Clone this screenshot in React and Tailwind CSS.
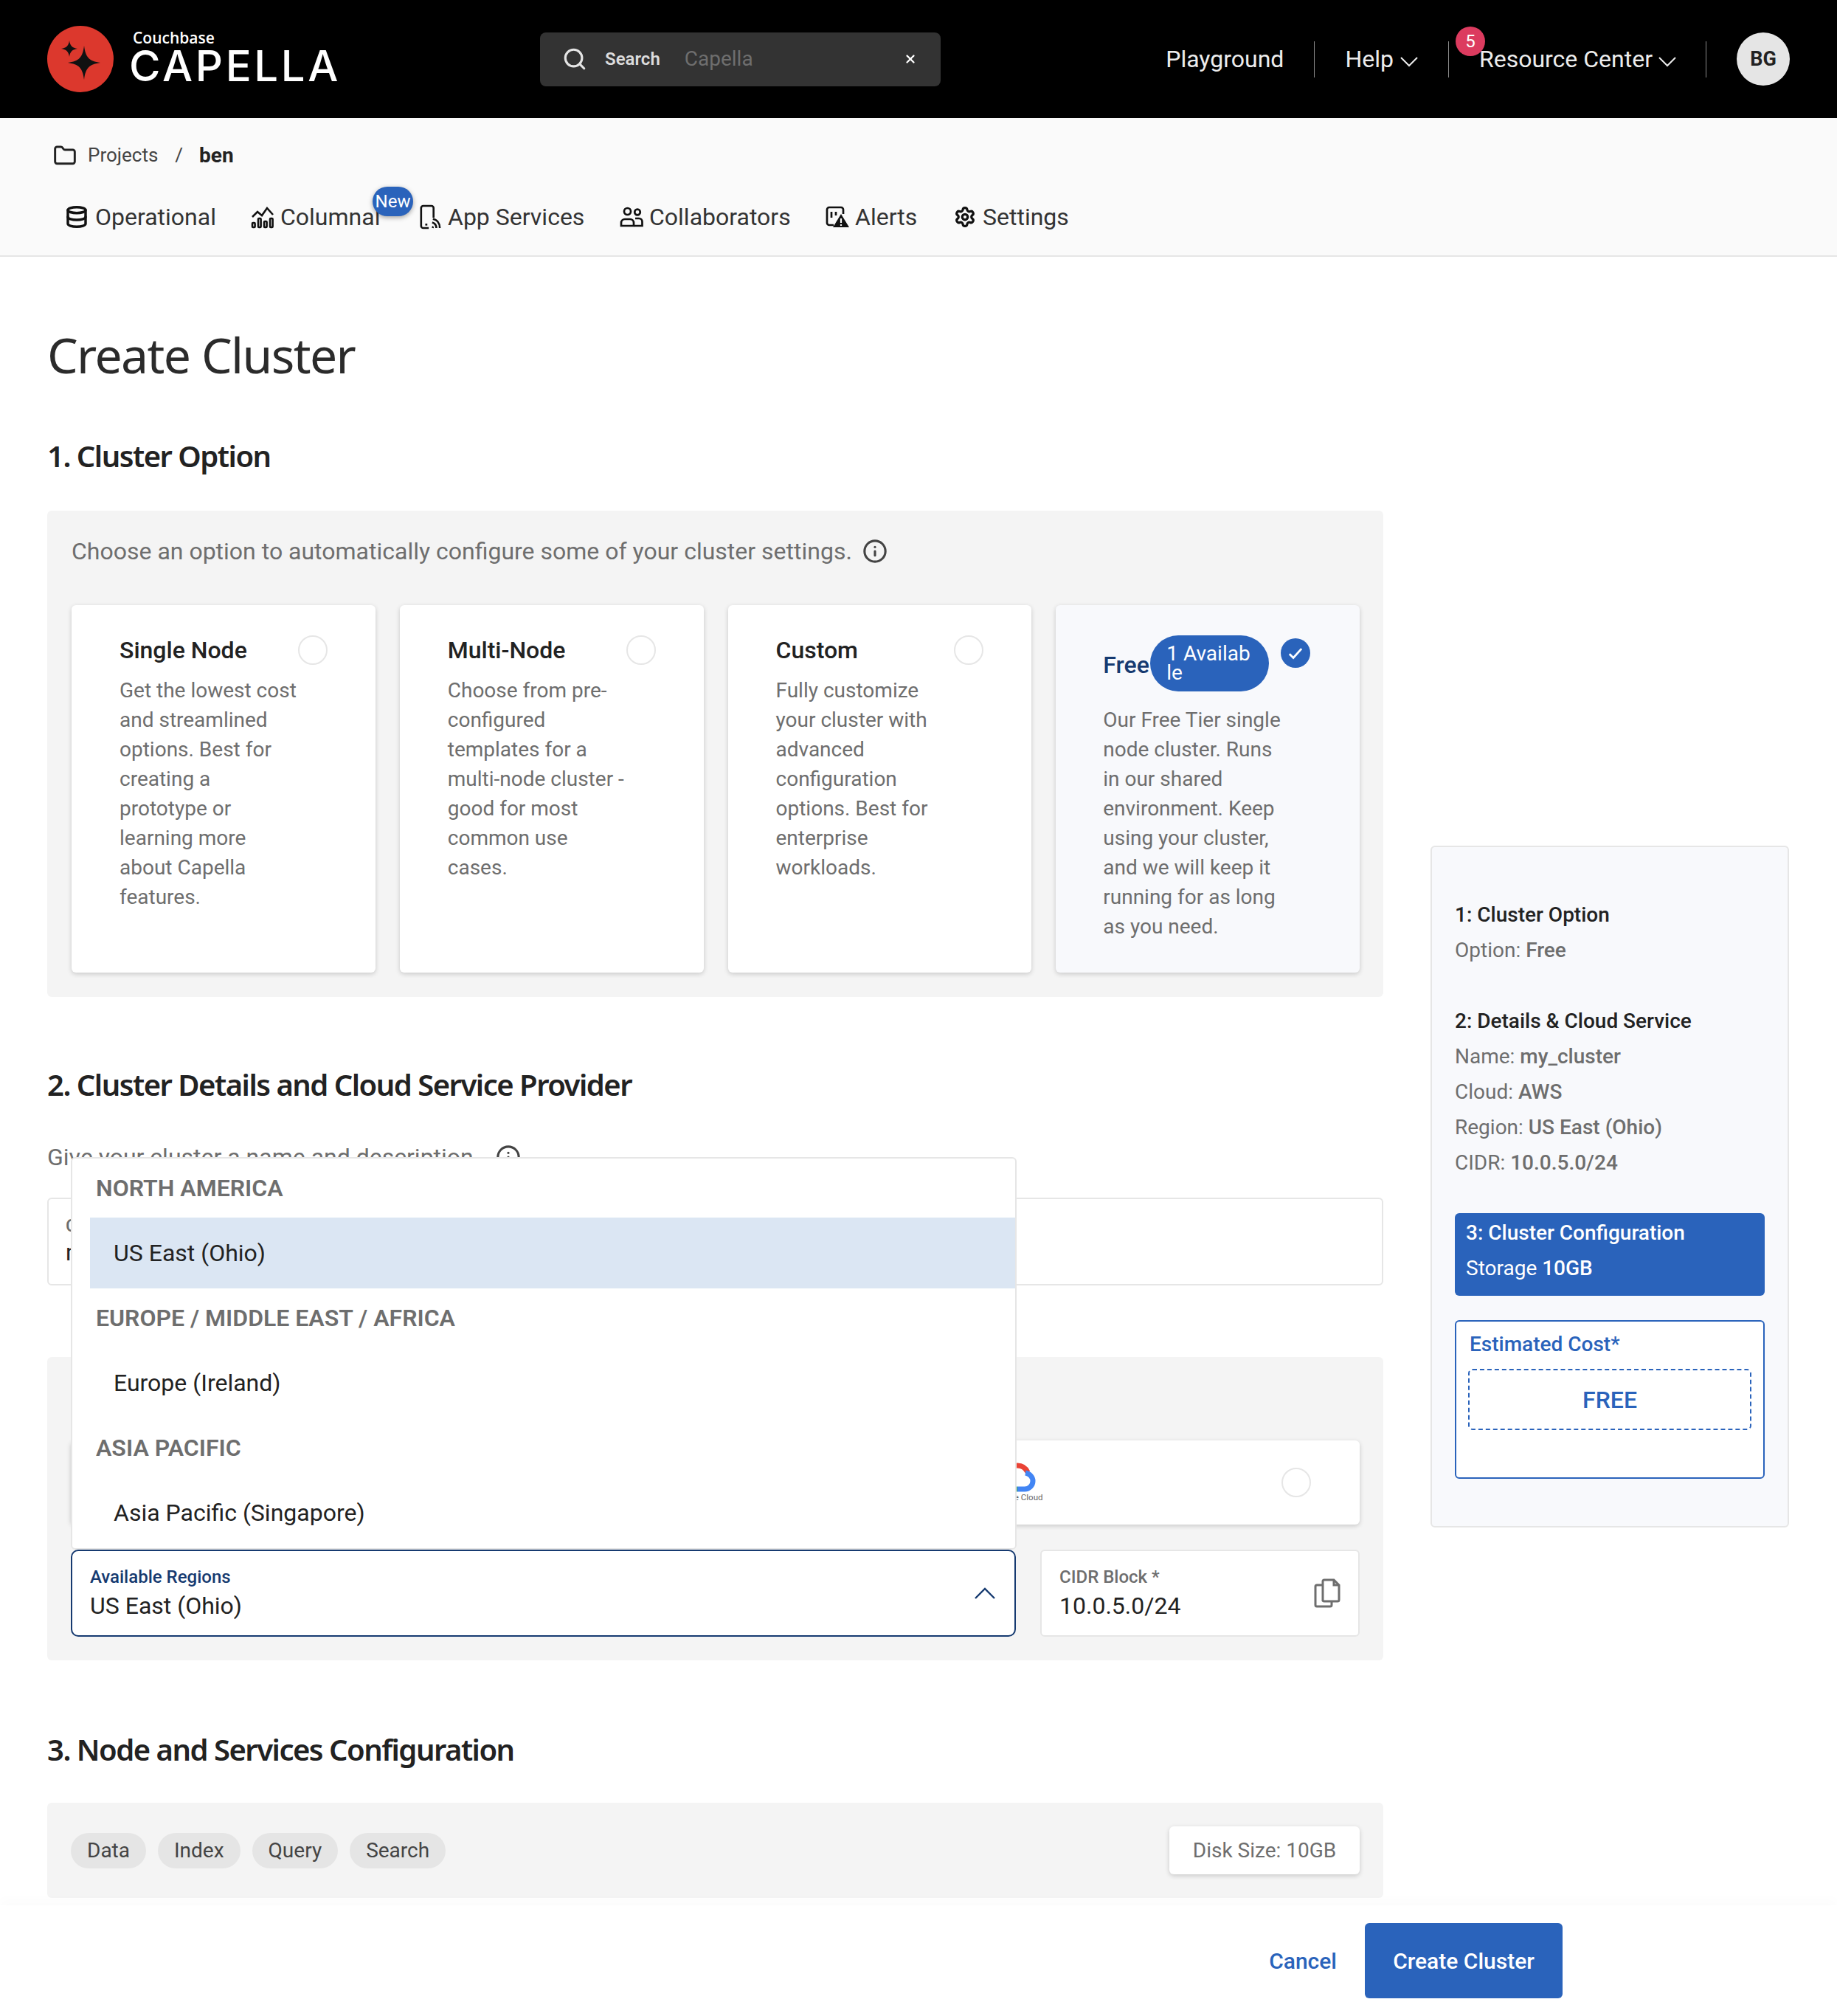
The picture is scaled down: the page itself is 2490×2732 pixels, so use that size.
import { Database, Folder, Info, Search, Settings, X } from 'lucide-react'

const tabs = [
  { label: 'Operational', icon: <Database className="w-[32px] h-[36px] text-[#111]" strokeWidth={2.6} />, gap: 'ml-[9px]', width: 'w-[252px]' },
  { label: 'Columnal', icon: <ColumnalIcon />, gap: 'ml-[8px]', width: 'w-[228px]' },
  { label: 'App Services', icon: <AppServicesIcon />, gap: 'ml-[9px]', width: 'w-[272px]' },
  { label: 'Collaborators', icon: <CollaboratorsIcon />, gap: 'ml-[8px]', width: 'w-[279px]' },
  { label: 'Alerts', icon: <AlertsIcon />, gap: 'ml-[8px]', width: 'w-[174px]' },
  { label: 'Settings', icon: <Settings className="w-[30px] h-[30px] text-[#111]" strokeWidth={2.6} />, gap: 'ml-[9px]', width: '' },
]

const clusterOptions = [
  {
    title: 'Single Node',
    text: 'Get the lowest cost\nand streamlined\noptions. Best for\ncreating a\nprototype or\nlearning more\nabout Capella\nfeatures.',
  },
  {
    title: 'Multi-Node',
    text: 'Choose from pre-\nconfigured\ntemplates for a\nmulti-node cluster -\ngood for most\ncommon use\ncases.',
  },
  {
    title: 'Custom',
    text: 'Fully customize\nyour cluster with\nadvanced\nconfiguration\noptions. Best for\nenterprise\nworkloads.',
  },
]

const regionGroups = [
  { name: 'NORTH AMERICA', region: 'US East (Ohio)', active: true },
  { name: 'EUROPE / MIDDLE EAST / AFRICA', region: 'Europe (Ireland)' },
  { name: 'ASIA PACIFIC', region: 'Asia Pacific (Singapore)' },
]

function ColumnalIcon() {
  return (
    <svg viewBox="0 0 32 32" className="w-[32px] h-[32px] text-[#111]" fill="none" stroke="currentColor" strokeWidth="2.6">
      <path d="M2 16l7-7 6 5 7-10 8 9" />
      <rect x="2" y="24" width="3.6" height="6" rx="1" />
      <rect x="10" y="18" width="3.6" height="12" rx="1" />
      <rect x="18" y="22" width="3.6" height="8" rx="1" />
      <rect x="26" y="18" width="3.6" height="12" rx="1" />
    </svg>
  )
}

function AppServicesIcon() {
  return (
    <svg viewBox="0 0 32 36" className="w-[30px] h-[34px] text-[#111]" fill="none" stroke="currentColor" strokeWidth="2.8">
      <path d="M14 34H6a3 3 0 0 1-3-3V5a3 3 0 0 1 3-3h12a3 3 0 0 1 3 3v14" />
      <path d="M9 29h3" />
      <path d="M20 34a2 2 0 0 0-1-2M25 34c0-4-2-7-6-8M30 34c0-7-4-12-10-13" />
    </svg>
  )
}

function CollaboratorsIcon() {
  return (
    <svg viewBox="0 0 32 28" className="w-[32px] h-[28px] text-[#111]" fill="none" stroke="currentColor" strokeWidth="2.7">
      <circle cx="10.5" cy="6.5" r="4.5" />
      <circle cx="24" cy="7.5" r="3.8" />
      <path d="M2 26v-4a5 5 0 0 1 5-5h7a5 5 0 0 1 5 5v4z" />
      <path d="M21 16h5a4.5 4.5 0 0 1 4.500 4.500V26h-11" />
    </svg>
  )
}

function AlertsIcon() {
  return (
    <svg viewBox="0 0 32 32" className="w-[32px] h-[32px] text-[#111]" fill="none" stroke="currentColor" strokeWidth="2.7">
      <path d="M11 27H5a3 3 0 0 1-3-3V6a3 3 0 0 1 3-3h16a3 3 0 0 1 3 3v6" />
      <path d="M8 9v8M14 9v5" />
      <path d="M21 12l11 18H10z" fill="currentColor" stroke="none" />
      <path d="M21 18v6M21 26v2" stroke="#fafafa" strokeWidth="2.2" />
    </svg>
  )
}

function CapellaMark() {
  return (
    <svg viewBox="0 0 90 90" className="w-[90px] h-[90px] shrink-0">
      <circle cx="45" cy="45" r="45" fill="#dc382d" />
      <path d="M50 27c2 16 7 21 22 23-15 2-20 7-22 23-2-16-7-21-22-23 15-2 20-7 22-23z" fill="#111" />
      <path d="M30 20c1 7 4 10 11 11-7 1-10 4-11 11-1-7-4-10-11-11 7-1 10-4 11-11z" fill="#111" />
    </svg>
  )
}

function GoogleCloudLogo() {
  return (
    <svg viewBox="0 0 50 40" className="w-[50px] h-[40px]" fill="none" strokeWidth="7">
      <path d="M13 12c3-5 7-8 12-8 6 0 11 3 14 9" stroke="#ea4335" />
      <path d="M36 14c6 1 10 6 10 11 0 6-5 11-11 11H25" stroke="#4285f4" />
      <path d="M25 36H14" stroke="#34a853" />
      <path d="M14 36C7 36 3 31 3 25c0-5 3-9 8-11" stroke="#fbbc05" />
    </svg>
  )
}

function CopyIcon() {
  return (
    <svg viewBox="0 0 36 40" className="w-[36px] h-[40px]" fill="none" stroke="#6e6e6e" strokeWidth="3">
      <path d="M12 31V4a2 2 0 0 1 2-2h13l7 7v20a2 2 0 0 1-2 2H14a2 2 0 0 1-2-2z" />
      <path d="M27 2v7h7" />
      <path d="M12 9H4a2 2 0 0 0-2 2v25a2 2 0 0 0 2 2h18a2 2 0 0 0 2-2v-5" />
    </svg>
  )
}

function ThinChevron() {
  return (
    <svg viewBox="0 0 24 14" className="w-[24px] h-[14px] mt-[8px]" fill="none" stroke="currentColor" strokeWidth="2">
      <path d="M1 1l11 11L23 1" />
    </svg>
  )
}

function CheckBadge() {
  return (
    <div className="w-[40px] h-[40px] rounded-full bg-[#2a63bb] flex items-center justify-center">
      <svg viewBox="0 0 24 24" className="w-[28px] h-[28px]" fill="none" stroke="#fff" strokeWidth="2.4">
        <path d="M5 13l4.500 4.500L19 7" />
      </svg>
    </div>
  )
}

function Radio() {
  return <div className="w-[40px] h-[40px] rounded-full border-2 border-[#e6e6e6] bg-white shrink-0" />
}

function SectionTitle({ className, children }) {
  return (
    <h2 className={`h-[60px] leading-[60px] text-[40px] font-semibold text-[#222] font-['Noto_Sans','Open_Sans',sans-serif] tracking-[-1.5px] ${className}`}>
      {children}
    </h2>
  )
}

function Header() {
  return (
    <header className="h-[160px] bg-black flex items-center pl-[64px] pr-[64px] relative">
      <CapellaMark />
      <div className="ml-[21px] w-[291px] h-[90px] flex flex-col text-white font-['Inter',sans-serif]">
        <span className="text-[21px] leading-[24px] font-semibold ml-[5px] mt-[4px] font-['Open_Sans',sans-serif]">Couchbase</span>
        <span className="text-[58px] leading-[52px] font-medium tracking-[3.7px]">CAPELLA</span>
      </div>
      <div className="ml-[266px] w-[543px] h-[73px] bg-[#333] rounded-[8px] flex items-center pl-[30px] pr-[32px]">
        <Search className="w-[34px] h-[34px] text-[#e5e5e5]" strokeWidth={2.2} />
        <span className="ml-[24px] text-[24px] font-semibold text-[#dcdcdc]">Search</span>
        <span className="ml-[33px] text-[28px] text-[#6e6e6e]">Capella</span>
        <X className="ml-auto w-[18px] h-[18px] text-white" strokeWidth={3} />
      </div>
      <nav className="ml-auto flex items-center text-[32px] text-[#ececec]">
        <span>Playground</span>
        <div className="mx-[41px] w-px h-[49px] bg-[#8a8a8a]" />
        <span>Help</span>
        <span className="ml-[9px]"><ThinChevron /></span>
        <div className="ml-[41px] mr-[41px] w-px h-[49px] bg-[#8a8a8a]" />
        <span className="relative">
          Resource Center
          <span className="absolute -left-[32px] -top-[20px] w-[40px] h-[40px] rounded-full bg-[#dc3b5f] text-white text-[24px] leading-[40px] text-center">5</span>
        </span>
        <span className="ml-[8px]"><ThinChevron /></span>
        <div className="ml-[40px] mr-[41px] w-px h-[49px] bg-[#8a8a8a]" />
        <div className="w-[72px] h-[72px] rounded-full bg-[#e5e5e5] text-[#222] text-[27px] font-bold flex items-center justify-center">BG</div>
      </nav>
    </header>
  )
}

function SubHeader() {
  return (
    <div className="h-[188px] bg-[#fafafa] border-b-2 border-[#e6e6e6] text-[#222]">
      <div className="pt-[32px] pl-[70px] h-[69px] flex items-center text-[26px]">
        <Folder className="w-[36px] h-[32px]" strokeWidth={2.2} />
        <span className="ml-[13px] text-[#444]">Projects</span>
        <span className="ml-[23px] text-[#444]">/</span>
        <span className="ml-[22px] text-[28px] font-bold">ben</span>
      </div>
      <div className="mt-[37px] pl-[88px] h-[56px] flex items-center text-[32px] text-[#333]">
        {tabs.map((tab) => (
          <div key={tab.label} className={`relative flex items-center ${tab.width}`}>
            {tab.icon}
            <span className={tab.gap}>{tab.label}</span>
            {tab.label === 'Columnal' && (
              <span className="absolute left-[165px] -top-[17px] w-[55px] h-[40px] rounded-full bg-[#2a63bb] text-white text-[24px] leading-[40px] text-center shadow-[0_2px_6px_rgba(0,0,0,0.35)]">
                New
              </span>
            )}
          </div>
        ))}
      </div>
    </div>
  )
}

function OptionCard({ option }) {
  return (
    <div className="h-[498px] bg-white rounded-[6px] pl-[65px] shadow-[0_2px_6px_rgba(0,0,0,0.18)]">
      <div className="pt-[41px] pr-[65px] flex items-center justify-between h-[81px]">
        <h3 className="text-[32px] font-medium text-[#222] leading-[40px]">{option.title}</h3>
        <Radio />
      </div>
      <p className="mt-[15px] text-[28px] leading-[40px] text-[#6e6e6e] whitespace-pre-line">{option.text}</p>
    </div>
  )
}

function FreeCard() {
  return (
    <div className="h-[498px] bg-[#f8f9fc] rounded-[6px] pl-[64px] shadow-[0_2px_6px_rgba(0,0,0,0.18)]">
      <div className="pt-[41px] flex items-start h-[117px]">
        <h3 className="text-[32px] font-medium text-[#163a70] leading-[40px] mt-[20px] w-[64px]">Free</h3>
        <div className="w-[161px] h-[76px] rounded-[38px] bg-[#2a63bb] text-white text-[28px] leading-[26px] pl-[22px] pt-[12px]">
          1 Availab<br />le
        </div>
        <div className="ml-[16px] mt-[4px]"><CheckBadge /></div>
      </div>
      <p className="mt-[19px] text-[28px] leading-[40px] text-[#6e6e6e] whitespace-pre-line">
        {'Our Free Tier single\nnode cluster. Runs\nin our shared\nenvironment. Keep\nusing your cluster,\nand we will keep it\nrunning for as long\nas you need.'}
      </p>
    </div>
  )
}

function ProviderCard({ children }) {
  return (
    <div className="h-[114px] flex-1 bg-white rounded-[6px] shadow-[0_2px_6px_rgba(0,0,0,0.18)] flex items-center justify-between pr-[66px]">
      {children}
    </div>
  )
}

function RegionMenu() {
  return (
    <div className="absolute left-[96px] top-[1220px] w-[1282px] h-[532px] bg-white border-2 border-[#e6e6e6] rounded-[6px] pl-[24px] z-10">
      {regionGroups.map((group) => (
        <div key={group.name}>
          <div className="h-[80px] pl-[8px] flex items-center text-[32px] font-semibold text-[#6e6e6e]">{group.name}</div>
          <div className={`h-[96px] pl-[32px] flex items-center text-[32px] text-[#222] ${group.active ? 'bg-[#dbe6f3]' : ''}`}>
            {group.region}
          </div>
        </div>
      ))}
    </div>
  )
}

function Summary() {
  return (
    <aside className="w-[486px] h-[924px] mt-[798px] bg-[#f8f9fc] border-2 border-[#e6e6e6] rounded-[6px] px-[31px] pt-[68px] text-[28px] leading-[48px] text-[#6e6e6e]">
      <h4 className="font-medium text-[#222]">1: Cluster Option</h4>
      <p>Option: <span className="font-medium">Free</span></p>
      <h4 className="mt-[48px] font-medium text-[#222]">2: Details &amp; Cloud Service</h4>
      <p>Name: <span className="font-medium">my_cluster</span></p>
      <p>Cloud: <span className="font-medium">AWS</span></p>
      <p>Region: <span className="font-medium">US East (Ohio)</span></p>
      <p>CIDR: <span className="font-medium">10.0.5.0/24</span></p>
      <div className="mt-[44px] h-[112px] bg-[#2a63bb] rounded-[6px] text-white px-[15px] pt-[3px]">
        <h4 className="font-medium">3: Cluster Configuration</h4>
        <p>Storage <span className="font-medium">10GB</span></p>
      </div>
      <div className="mt-[33px] h-[215px] bg-white border-2 border-[#2a63bb] rounded-[6px] px-[16px] pt-[7px] text-[#2a63bb]">
        <h4 className="font-medium ml-[2px]">Estimated Cost*</h4>
        <div className="mt-[9px] h-[83px] border-2 border-dashed border-[#2a63bb] rounded-[6px] flex items-center justify-center text-[32px] font-medium">
          FREE
        </div>
      </div>
    </aside>
  )
}

export default function App() {
  return (
    <div className="relative w-full h-[2732px] overflow-hidden bg-white font-['Roboto',sans-serif]">
      <Header />
      <SubHeader />
      <div className="relative pl-[64px] pr-[65px] flex justify-between">
        <main className="w-[1811px]">
          <h1 className="mt-[92px] h-[80px] leading-[80px] text-[66px] text-[#2b2b2b] font-['Noto_Sans','Open_Sans',sans-serif] tracking-[-1.6px]">Create Cluster</h1>

          <SectionTitle className="mt-[68px]">1. Cluster Option</SectionTitle>
          <section className="mt-[44px] h-[659px] bg-[#f4f4f4] rounded-[6px] pl-[33px] pr-[32px] pt-[31px]">
            <div className="h-[48px] flex items-center text-[32px] text-[#6e6e6e]">
              Choose an option to automatically configure some of your cluster settings.
              <Info className="ml-[14px] w-[34px] h-[34px] text-[#444]" strokeWidth={2.2} />
            </div>
            <div className="mt-[49px] grid grid-cols-4 gap-[33px]">
              {clusterOptions.map((option) => (
                <OptionCard key={option.title} option={option} />
              ))}
              <FreeCard />
            </div>
          </section>

          <SectionTitle className="mt-[89px]">2. Cluster Details and Cloud Service Provider</SectionTitle>
          <div className="mt-[44px] h-[48px] flex items-center text-[32px] text-[#6e6e6e]">
            Give your cluster a name and description.
            <Info className="ml-[22px] w-[34px] h-[34px] text-[#444]" strokeWidth={2.2} />
          </div>
          <div className="mt-[31px] h-[119px] bg-white border-2 border-[#e6e6e6] rounded-[6px] px-[23px] pt-[20px]">
            <div className="text-[24px] leading-[32px] font-medium text-[#6e6e6e]">Cluster Name *</div>
            <div className="text-[32px] leading-[40px] text-[#222]">my_cluster</div>
          </div>
          <section className="mt-[97px] h-[411px] bg-[#f4f4f4] rounded-[6px] px-[32px] pt-[113px]">
            <div className="flex gap-[33px]">
              <ProviderCard>
                <span className="ml-[48px] text-[32px] font-bold text-[#222]">AWS</span>
                <Radio />
              </ProviderCard>
              <ProviderCard>
                <span className="ml-[48px] text-[32px] font-bold text-[#222]">Azure</span>
                <Radio />
              </ProviderCard>
              <ProviderCard>
                <div className="ml-[62px] flex flex-col items-center">
                  <GoogleCloudLogo />
                  <span className="text-[11.5px] leading-[14px] text-[#666]">Google Cloud</span>
                </div>
                <Radio />
              </ProviderCard>
            </div>
            <div className="mt-[34px] flex gap-[33px]">
              <div className="w-[1281px] h-[118px] bg-white border-2 border-[#163a70] rounded-[10px] pl-[24px] pr-[26px] flex items-center justify-between">
                <div>
                  <div className="text-[24px] leading-[34px] font-medium text-[#163a70]">Available Regions</div>
                  <div className="text-[32px] leading-[44px] text-[#222]">US East (Ohio)</div>
                </div>
                <svg viewBox="0 0 28 16" className="w-[28px] h-[16px] text-[#163a70]" fill="none" stroke="currentColor" strokeWidth="2.4">
                  <path d="M1 15L14 2l13 13" />
                </svg>
              </div>
              <div className="flex-1 h-[118px] bg-white border-2 border-[#e6e6e6] rounded-[6px] pl-[24px] pr-[24px] flex items-center justify-between">
                <div>
                  <div className="text-[24px] leading-[34px] font-medium text-[#6e6e6e]">CIDR Block *</div>
                  <div className="text-[32px] leading-[44px] text-[#222]">10.0.5.0/24</div>
                </div>
                <CopyIcon />
              </div>
            </div>
          </section>

          <SectionTitle className="mt-[91px]">3. Node and Services Configuration</SectionTitle>
          <section className="mt-[42px] h-[129px] bg-[#f4f4f4] rounded-[6px] px-[32px] flex items-center justify-between">
            <div className="flex gap-[16px] text-[28px] text-[#444]">
              {['Data', 'Index', 'Query', 'Search'].map((chip) => (
                <span key={chip} className="h-[48px] leading-[48px] px-[22px] rounded-full bg-[#e5e5e5]">{chip}</span>
              ))}
            </div>
            <div className="w-[258px] h-[65px] bg-white rounded-[6px] flex items-center justify-center text-[28px] text-[#6e6e6e] shadow-[0_2px_6px_rgba(0,0,0,0.18)]">
              Disk Size: 10GB
            </div>
          </section>
        </main>
        <Summary />
        <RegionMenu />
      </div>

      <footer className="absolute left-0 right-0 bottom-0 h-[150px] bg-white shadow-[0_-8px_14px_rgba(0,0,0,0.015)] flex items-center justify-end pr-[372px] z-20">
        <span className="text-[30px] font-medium text-[#2a63bb]">Cancel</span>
        <button type="button" className="ml-[38px] w-[268px] h-[102px] rounded-[6px] bg-[#2a63bb] text-white text-[30px] font-medium">
          Create Cluster
        </button>
      </footer>
    </div>
  )
}
